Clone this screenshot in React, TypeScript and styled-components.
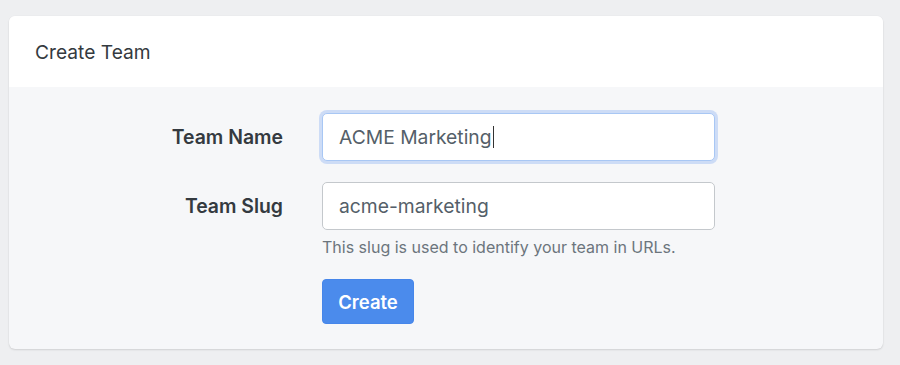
import React from "react";
import styled, { createGlobalStyle } from "styled-components";

const Global = createGlobalStyle`
  html, body { margin: 0; padding: 0; background: #eeeff1; }
  body { font-family: Inter, "Noto Sans", "Liberation Sans", sans-serif; -webkit-font-smoothing: antialiased; }
  * { box-sizing: border-box; }
`;

const Page = styled.div`
  padding: 16px 17px 16px 9px;
`;

const Card = styled.div`
  background: #f6f7f9;
  border-radius: 6px;
  box-shadow: 0 1px 2px rgba(0, 0, 0, 0.12), 0 0 1px rgba(0, 0, 0, 0.08);
  overflow: hidden;
`;

const Header = styled.div`
  background: #ffffff;
  height: 71px;
  display: flex;
  align-items: center;
  padding-left: 26px;
  font-size: 19.2px;
  color: #343a40;
`;

const Body = styled.div`
  display: grid;
  grid-template-columns: 274px 393px;
  column-gap: 39px;
  row-gap: 21px;
  padding: 26px 0 25px;
`;

const Label = styled.div`
  display: flex;
  align-items: center;
  justify-content: flex-end;
  height: 48px;
  font-size: 19.4px;
  font-weight: 600;
  color: #343a40;
`;

const Field = styled.div`
  display: flex;
  flex-direction: column;
`;

const Input = styled.div<{ $focused?: boolean }>`
  height: 48px;
  display: flex;
  align-items: center;
  padding: 0 16px;
  background: #fff;
  border-radius: 5px;
  border: 1px solid ${(p) => (p.$focused ? "#a8c7f4" : "#c4c8cc")};
  box-shadow: ${(p) => (p.$focused ? "0 0 0 3px rgba(100, 150, 240, 0.28)" : "none")};
  font-size: 19.3px;
  color: #555f69;
`;

const Caret = styled.span`
  display: inline-block;
  width: 1px;
  height: 22px;
  background: #333;
  margin-left: 1px;
`;

const Help = styled.div`
  margin-top: 7px;
  font-size: 16px;
  line-height: 20px;
  color: #6c757d;
`;

const Button = styled.button`
  grid-column: 2;
  justify-self: start;
  width: 92px;
  height: 45px;
  border: 1px solid #4686ea;
  border-radius: 4px;
  background: #4b8bec;
  color: #fff;
  font-family: inherit;
  font-size: 18.5px;
  font-weight: 600;
  margin-top: 1px;
`;

export default function App() {
  return (
    <>
      <Global />
      <Page>
        <Card>
          <Header>Create Team</Header>
          <Body>
            <Label>Team Name</Label>
            <Field>
              <Input $focused>
                ACME Marketing<Caret />
              </Input>
            </Field>
            <Label>Team Slug</Label>
            <Field>
              <Input>acme-marketing</Input>
              <Help>This slug is used to identify your team in URLs.</Help>
            </Field>
            <Button>Create</Button>
          </Body>
        </Card>
      </Page>
    </>
  );
}
